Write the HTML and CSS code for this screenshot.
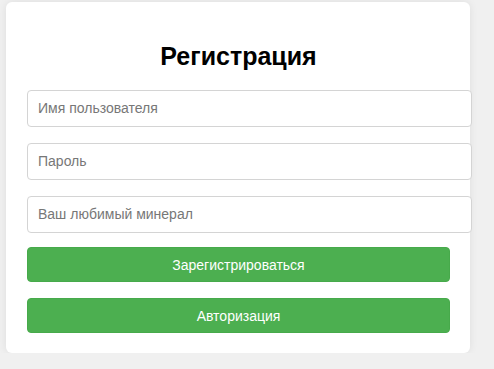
FILE: index.html
```html
<!DOCTYPE html>
<html lang="ru">
<head>
<meta charset="utf-8">
<title>Регистрация</title>
<link rel="stylesheet" href="styles.css">
</head>
<body>
<div class="card">
  <h2 class="title">Регистрация</h2>
  <form class="form">
    <input class="field" type="text" placeholder="Имя пользователя">
    <input class="field" type="password" placeholder="Пароль">
    <input class="field" type="text" placeholder="Ваш любимый минерал">
    <button class="btn btn-first" type="button">Зарегистрироваться</button>
    <button class="btn" type="button">Авторизация</button>
  </form>
</div>
</body>
</html>
```
FILE: styles.css
```css
html, body {
  margin: 0;
  padding: 0;
  background: #f0f0f0;
  font-family: "Liberation Sans", Arial, sans-serif;
}
body {
  padding: 2px 0 0 6px;
}
.card {
  width: 423px;
  padding: 20px 20px 20px 21px;
  background: #ffffff;
  border-radius: 6px;
  box-shadow: 0 0 8px rgba(0, 0, 0, 0.08);
}
.title {
  margin: 20px 0 20px;
  font-size: 25px;
  line-height: 28px;
  font-weight: bold;
  text-align: center;
  color: #000;
}
.form {
  display: flex;
  flex-direction: column;
  align-items: flex-start;
}
.field {
  width: 100%;
  height: 15px;
  padding: 10px;
  margin: 0 0 16px;
  border: 1px solid #d4d4d4;
  border-radius: 4px;
  font-family: "Liberation Sans", Arial, sans-serif;
  font-size: 14px;
  line-height: 15px;
  color: #333;
  background: #fff;
  box-sizing: content-box;
}
.field::placeholder {
  color: #777;
}
.btn {
  width: 100%;
  height: 35px;
  margin: 0 0 16px;
  border: 1px solid #47aa4b;
  border-radius: 4px;
  background: #4caf50;
  color: #fff;
  font-family: "Liberation Sans", Arial, sans-serif;
  font-size: 14px;
  cursor: pointer;
}
.btn-first {
  margin-top: -2px;
}
.btn:last-child {
  margin-bottom: 0;
}
```
